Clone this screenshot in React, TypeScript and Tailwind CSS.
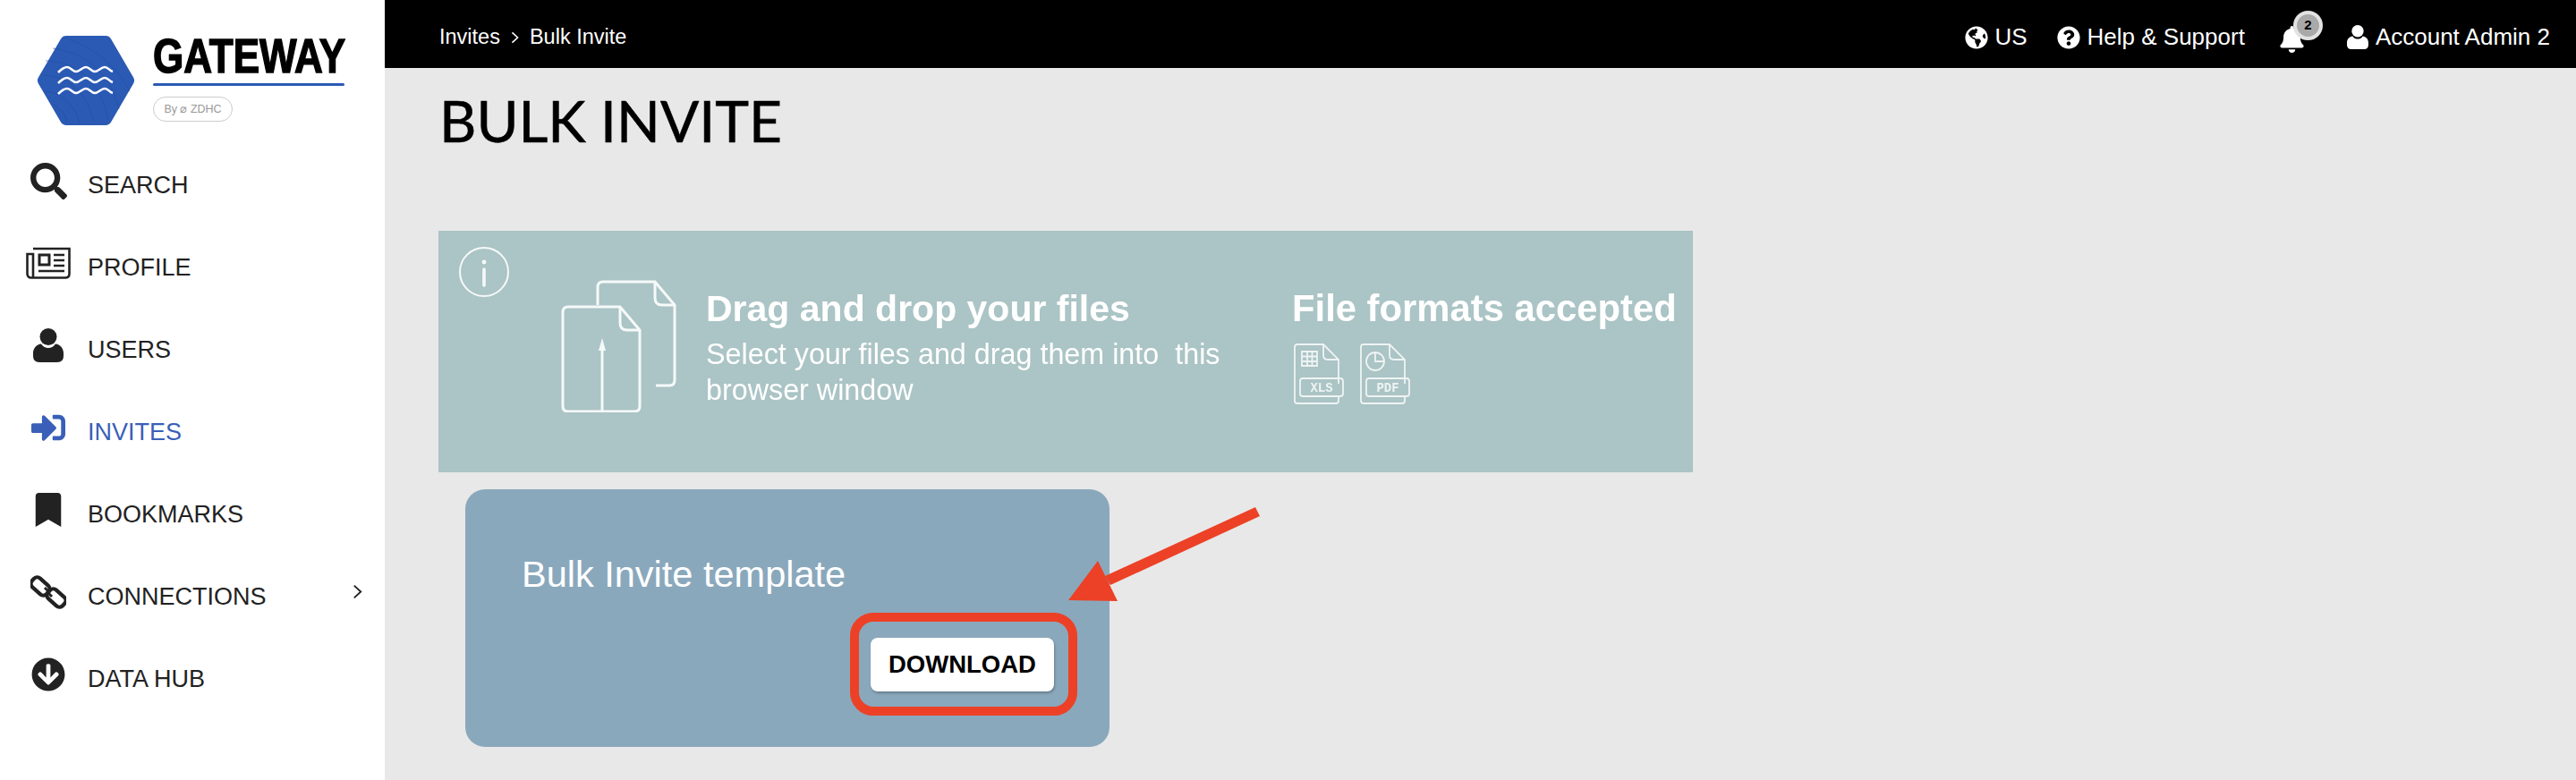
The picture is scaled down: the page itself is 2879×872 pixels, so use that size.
import { ReactNode } from 'react';
import {
  FaSearch,
  FaSignInAlt,
  FaBookmark,
  FaArrowCircleDown,
  FaGlobeAmericas,
  FaQuestionCircle,
  FaBell,
} from 'react-icons/fa';

const sans = "font-['Liberation_Sans',Arial,sans-serif]";

function UserIcon({ className }: { className: string }) {
  return (
    <svg viewBox="0 0 34 38" fill="currentColor" className={className}>
      <circle cx="17" cy="9.5" r="9.5" />
      <path d="M0 31 V28 C0 22 4 18 9 17.5 C11 20.5 14 22 17 22 C20 22 23 20.5 25 17.5 C30 18 34 22 34 28 V31 Q34 38 27 38 H7 Q0 38 0 31 Z" />
    </svg>
  );
}

function NewspaperIcon() {
  return (
    <svg viewBox="0 0 50 36" fill="none" stroke="currentColor" strokeWidth="2.6" className="w-[50px] h-[36px]">
      <path d="M8 2 H48.5 V30 Q48.5 34.5 44 34.5 H6 Q1.5 34.5 1.5 30 V8 H8 V34" />
      <path d="M15 9 H26 V20 H15 Z" strokeWidth="3" />
      <path d="M31 9 H43 M31 15 H43 M31 21 H43 M14 27 H43" strokeWidth="2.6" />
    </svg>
  );
}

function ChainIcon() {
  return (
    <svg viewBox="0 0 40 40" fill="none" stroke="currentColor" strokeWidth="4.2" className="w-[40px] h-[40px]">
      <rect x="0" y="7" width="22" height="13" rx="5" transform="rotate(42 11 13.5)" />
      <rect x="18" y="20" width="22" height="13" rx="5" transform="rotate(42 29 26.5)" />
      <path d="M16 15 L20 19 M20 21 L24 25" strokeWidth="3" />
    </svg>
  );
}

function Chevron({ className }: { className: string }) {
  return (
    <svg viewBox="0 0 10 16" fill="none" stroke="currentColor" strokeWidth="1.8" className={className}>
      <path d="M1.5 1.5 L8.5 8 L1.5 14.5" />
    </svg>
  );
}

type NavItem = { label: string; icon: ReactNode; active?: boolean; more?: boolean };

const navItems: NavItem[] = [
  { label: 'SEARCH', icon: <FaSearch className="w-[41px] h-[41px]" /> },
  { label: 'PROFILE', icon: <NewspaperIcon /> },
  { label: 'USERS', icon: <UserIcon className="w-[34px] h-[38px]" /> },
  { label: 'INVITES', icon: <FaSignInAlt className="w-[38px] h-[38px]" />, active: true },
  { label: 'BOOKMARKS', icon: <FaBookmark className="w-[32px] h-[38px]" /> },
  { label: 'CONNECTIONS', icon: <ChainIcon />, more: true },
  { label: 'DATA HUB', icon: <FaArrowCircleDown className="w-[38px] h-[38px]" /> },
];

function Logo() {
  return (
    <svg viewBox="0 0 110 100" className="w-[110px] h-[100px] shrink-0">
      <polygon points="8,50 33,7 77,7 102,50 77,93 33,93" fill="#2a5ab4" stroke="#2a5ab4" strokeWidth="14" strokeLinejoin="round" />
      <g fill="none" stroke="#234e9c" strokeWidth="0.7" opacity="0.8">
        <path d="M30 2 C58 10 88 30 104 62" />
        <path d="M18 14 C50 18 82 38 92 82" />
        <path d="M10 28 C40 28 70 46 80 94" />
        <path d="M5 44 C32 44 56 62 64 96" />
        <path d="M8 62 C26 62 42 76 48 97" />
        <path d="M17 76 C26 80 32 88 34 96" />
      </g>
      <g fill="none" stroke="#fff" strokeWidth="2.6">
        {[0, 12, 24].map((y) => (
          <path
            key={y}
            transform={`translate(0 ${y})`}
            d="M24 41 C28 37 31 35 34 35 C38 35 40 40 44 40 C48 40 51 35 55 35 C59 35 61 40 65 40 C69 40 72 35 76 35 C80 35 81 39 85 40"
          />
        ))}
      </g>
    </svg>
  );
}

function UploadDocs() {
  return (
    <svg viewBox="0 0 130 148" fill="none" stroke="#fff" strokeWidth="3" className="w-[130px] h-[148px] shrink-0 opacity-90">
      <path d="M41 28 V8 Q41 2 47 2 H105 L127 28 V112 Q127 118 121 118 H106" />
      <path d="M105 2 V20 Q105 28 113 28 H127" />
      <path d="M2 36 Q2 30 8 30 H66 L88 56 V141 Q88 147 82 147 H8 Q2 147 2 141 Z" />
      <path d="M66 30 V48 Q66 56 74 56 H88" />
      <path d="M46 147 V72" />
      <path d="M46 65 L50 79 H42 Z" fill="#fff" stroke="none" />
    </svg>
  );
}

function FormatIcon({ label, kind }: { label: string; kind: 'grid' | 'pie' }) {
  return (
    <svg viewBox="0 0 58 68" fill="none" stroke="#fff" strokeWidth="1.8" className="w-[58px] h-[68px] opacity-80">
      <path d="M3 44 V4 Q3 1 6 1 H35 L52 18 V45 M52 59 V64 Q52 67 49 67 H6 Q3 67 3 64 V44" />
      <path d="M35 1 V13 Q35 18 40 18 H52" />
      {kind === 'grid' ? (
        <path d="M11 9 H28 V25 H11 Z M11 14.5 H28 M11 20 H28 M17 9 V25 M22.5 9 V25" />
      ) : (
        <>
          <circle cx="19" cy="20" r="10" />
          <path d="M19 10 V20 H29" />
        </>
      )}
      <rect x="9" y="39" width="48" height="20" rx="3" />
      <text x="33" y="54" textAnchor="middle" fill="#fff" stroke="none" className="font-['Liberation_Mono',monospace] text-[14px] font-bold">
        {label}
      </text>
    </svg>
  );
}

function Sidebar() {
  return (
    <aside className={`w-[430px] shrink-0 bg-white text-[#222] ${sans}`}>
      <div className="h-[161px] pl-[41px] pt-[40px] flex gap-[20px]">
        <Logo />
        <div className="w-[218px]">
          <div className="h-[47px] leading-[44px] text-[54px] font-bold text-black origin-left scale-x-[0.815] whitespace-nowrap [-webkit-text-stroke:1.5px_black]">
            GATEWAY
          </div>
          <div className="h-[3px] w-[214px] mt-[6px] bg-[#2a5ab4] rounded-full" />
          <div className="mt-[12px] w-[89px] h-[28px] border border-[#ccc] rounded-full flex items-center justify-center text-[12.5px] text-[#999] whitespace-nowrap">
            By ⌀ ZDHC
          </div>
        </div>
      </div>
      <nav>
        {navItems.map((item) => (
          <div
            key={item.label}
            className={`h-[92px] pl-[29px] pr-[25px] flex items-center ${item.active ? 'text-[#3a5fb8]' : ''}`}
          >
            <span className="w-[50px] mb-[10px] mr-[19px] flex justify-center">{item.icon}</span>
            <span className="text-[27px] flex-1">{item.label}</span>
            {item.more && <Chevron className="w-[11px] h-[17px] mb-[12px] text-[#222]" />}
          </div>
        ))}
      </nav>
    </aside>
  );
}

function TopBar() {
  return (
    <header className={`h-[76px] bg-black text-white flex items-center justify-between pt-[7px] pl-[61px] pr-[29px] ${sans}`}>
      <div className="flex items-center text-[23.5px]">
        <span>Invites</span>
        <Chevron className="w-[9px] h-[14px] mx-[12px]" />
        <span>Bulk Invite</span>
      </div>
      <div className="flex items-center text-[26px]">
        <FaGlobeAmericas className="w-[26px] h-[26px] mr-[7px]" />
        <span>US</span>
        <FaQuestionCircle className="w-[26px] h-[26px] ml-[33px] mr-[8px]" />
        <span>Help &amp; Support</span>
        <span className="relative ml-[39px] mr-[48px]">
          <FaBell className="w-[27px] h-[30px] mt-[4px]" />
          <span className="absolute -top-[13px] left-[15px] w-[33px] h-[33px] rounded-full bg-[#a9a9a9] border-[4px] border-[#e2e2e2] flex items-center justify-center text-[15px] font-bold text-black">
            2
          </span>
        </span>
        <UserIcon className="w-[24px] h-[27px] mr-[8px]" />
        <span>Account Admin 2</span>
      </div>
    </header>
  );
}

function InfoBanner() {
  return (
    <section className="h-[270px] w-[1402px] bg-[#abc4c5] flex pl-[22px] pt-[17px] text-white blur-[0.4px]">
      <svg viewBox="0 0 58 58" fill="none" stroke="#fff" strokeWidth="2" className="w-[58px] h-[58px] shrink-0 opacity-90">
        <circle cx="29" cy="29" r="27" />
        <circle cx="29" cy="18" r="2.4" fill="#fff" stroke="none" />
        <path d="M29 26 V44" strokeWidth="3.6" strokeLinecap="round" />
      </svg>
      <div className="ml-[57px] mt-[38px]">
        <UploadDocs />
      </div>
      <div className="ml-[32px] mt-[45px] w-[620px]">
        <div className="text-[41px] leading-[50px] font-bold">Drag and drop your files</div>
        <div className="text-[32.3px] leading-[40px] mt-[6px] whitespace-pre">
          {'Select your files and drag them into  this\nbrowser window'}
        </div>
      </div>
      <div className="ml-[35px] mt-[45px]">
        <div className="text-[41.8px] leading-[50px] font-bold whitespace-nowrap">File formats accepted</div>
        <div className="flex gap-[16px] mt-[14px]">
          <FormatIcon label="XLS" kind="grid" />
          <FormatIcon label="PDF" kind="pie" />
        </div>
      </div>
    </section>
  );
}

function TemplateCard() {
  return (
    <section className="relative ml-[30px] mt-[19px] w-[720px] h-[288px] rounded-[22px] bg-[#8aa8bc] pl-[63px] pr-[62px] pt-[69px] flex flex-col text-white">
      <div className="text-[41.5px] leading-[52px]">Bulk Invite template</div>
      <button className="self-end mt-[45px] w-[205px] h-[60px] rounded-[8px] bg-white text-black text-[27.5px] font-bold shadow-[1px_2px_3px_rgba(0,0,0,0.25)]">
        DOWNLOAD
      </button>
      {/* annotation drawn over the screenshot */}
      <div className="absolute left-[430px] top-[138px] w-[254px] h-[115px] rounded-[26px] border-[10px] border-[#ec4126]" />
      <svg viewBox="0 0 214 106" className="absolute left-[674px] top-[20px] w-[214px] h-[106px]">
        <polygon points="0,104 33,60 55,105" fill="#ec4126" />
        <polygon points="209,0 214,10 47,87 41,77" fill="#ec4126" />
      </svg>
    </section>
  );
}

export default function App() {
  return (
    <div className={`flex h-[872px] w-[2879px] overflow-hidden bg-[#e8e8e8] ${sans}`}>
      <Sidebar />
      <main className="flex-1 flex flex-col">
        <TopBar />
        <div className="pl-[60px]">
          <h1 className="font-['Lato',sans-serif] text-[64px] leading-[76px] pt-[21px] pl-[1px] text-black h-[182px] [-webkit-text-stroke:0.6px_black]">BULK INVITE</h1>
          <InfoBanner />
          <TemplateCard />
        </div>
      </main>
    </div>
  );
}
